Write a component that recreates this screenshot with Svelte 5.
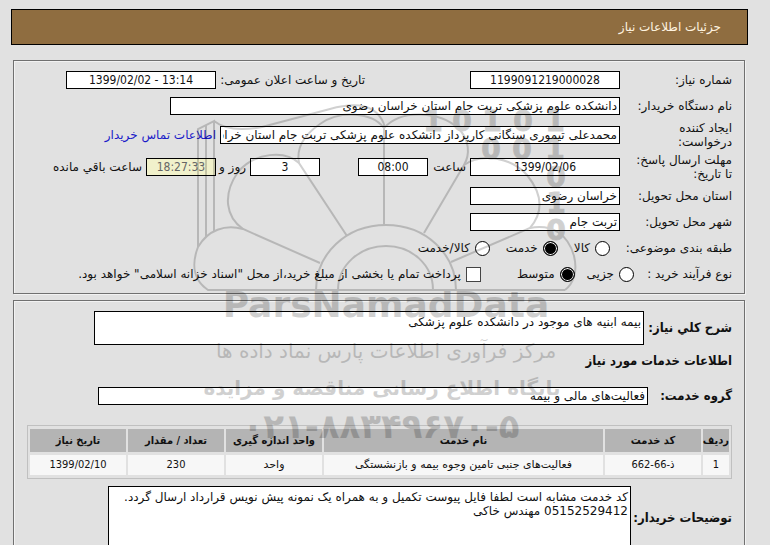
<script lang="ts">
  interface ServiceRow {
    index: string;
    code: string;
    name: string;
    unit: string;
    amount: string;
    date: string;
  }

  const rows: ServiceRow[] = [
    {
      index: "1",
      code: "ذ-66-662",
      name: "فعالیت‌های جنبی تامین وجوه بیمه و بازنشستگی",
      unit: "واحد",
      amount: "230",
      date: "1399/02/10",
    },
  ];

  const subjects = ["کالا", "خدمت", "کالا/خدمت"];
  const processes = ["جزیی", "متوسط"];

  const binaryDigits = [
    { x: 433, y: 131, digit: "1" },
    { x: 462, y: 131, digit: "0" },
    { x: 492, y: 131, digit: "1" },
    { x: 523, y: 131, digit: "0" },
    { x: 555, y: 131, digit: "1" },
    { x: 491, y: 159, digit: "0" },
    { x: 522, y: 159, digit: "0" },
    { x: 555, y: 159, digit: "1" },
    { x: 556, y: 187, digit: "0" },
    { x: 556, y: 213, digit: "1" },
    { x: 556, y: 240, digit: "0" },
  ];

  let subject = $state("خدمت");
  let process = $state("متوسط");
  let treasury = $state(false);
</script>

<div class="page" dir="rtl">
  <header class="title">جزئیات اطلاعات نیاز</header>

  <section class="panel">
    <div class="row">
      <label class="caption" for="need-no">شماره نیاز:</label>
      <input id="need-no" class="mid number" value="1199091219000028" readonly />
      <label class="announce" for="announce">تاریخ و ساعت اعلان عمومی:</label>
      <input id="announce" class="mid number" dir="ltr" value="1399/02/02 - 13:14" readonly />
    </div>
    <div class="row">
      <label class="caption" for="buyer">نام دستگاه خریدار:</label>
      <input id="buyer" class="wide" value="دانشکده علوم پزشکی تربت جام استان خراسان رضوی" readonly />
    </div>
    <div class="row tall">
      <label class="caption" for="creator">ایجاد کننده<br />درخواست:</label>
      <input id="creator" class="long" value="محمدعلی تیموری سنگانی کارپرداز دانشکده علوم پزشکی تربت جام استان خراسان رضوی" readonly />
      <a class="contact" href="#contact">اطلاعات تماس خریدار</a>
    </div>
    <div class="row tall">
      <label class="caption" for="deadline">مهلت ارسال پاسخ:<br />تا تاریخ:</label>
      <input id="deadline" class="mid number" value="1399/02/06" readonly />
      <label class="hour" for="hour">ساعت</label>
      <input id="hour" class="short number" value="08:00" readonly />
      <input id="days" class="short number days" value="3" readonly />
      <label class="and" for="days">روز و</label>
      <input id="remaining" class="short number remaining" value="18:27:33" readonly />
      <label class="left" for="remaining">ساعت باقي مانده</label>
    </div>
    <div class="row">
      <label class="caption" for="province">استان محل تحویل:</label>
      <input id="province" class="mid" value="خراسان رضوی" readonly />
    </div>
    <div class="row">
      <label class="caption" for="city">شهر محل تحویل:</label>
      <input id="city" class="mid" value="تربت جام" readonly />
    </div>
    <div class="row" role="radiogroup" aria-labelledby="subject-caption">
      <span class="caption subject" id="subject-caption">طبقه بندی موضوعی:</span>
      <div class="options">
        {#each subjects as item}
          <label class="option"><input type="radio" name="subject" value={item} bind:group={subject} />{item}</label>
        {/each}
      </div>
    </div>
    <div class="row" role="radiogroup" aria-labelledby="process-caption">
      <span class="caption process" id="process-caption">نوع فرآیند خرید :</span>
      <div class="options">
        {#each processes as item}
          <label class="option"><input type="radio" name="process" value={item} bind:group={process} />{item}</label>
        {/each}
      </div>
      <label class="option treasury">
        <input type="checkbox" bind:checked={treasury} />پرداخت تمام یا بخشی از مبلغ خرید،از محل "اسناد خزانه اسلامی" خواهد بود.
      </label>
    </div>
  </section>

  <section class="panel details">
    <div class="row">
      <label class="strong summary-label" for="summary">شرح کلي نیاز:</label>
      <textarea id="summary" class="summary" readonly>بیمه ابنیه های موجود در دانشکده علوم پزشکی</textarea>
    </div>
    <h2 class="strong">اطلاعات خدمات مورد نیاز</h2>
    <div class="row">
      <label class="strong group-label" for="group">گروه خدمت:</label>
      <input id="group" class="group" value="فعالیت‌های مالی و بیمه" readonly />
    </div>
    <table>
      <thead>
        <tr>
          <th class="c-index">ردیف</th>
          <th class="c-side">کد خدمت</th>
          <th>نام خدمت</th>
          <th class="c-side">واحد اندازه گیری</th>
          <th class="c-side">تعداد / مقدار</th>
          <th class="c-side">تاریخ نیاز</th>
        </tr>
      </thead>
      <tbody>
        {#each rows as row}
          <tr>
            <td class="number">{row.index}</td>
            <td class="number">{row.code}</td>
            <td>{row.name}</td>
            <td>{row.unit}</td>
            <td class="number">{row.amount}</td>
            <td class="number">{row.date}</td>
          </tr>
        {/each}
      </tbody>
    </table>
    <div class="row">
      <label class="strong notes-label" for="notes">توضیحات خریدار:</label>
      <textarea id="notes" class="notes" readonly>کد خدمت مشابه است لطفا فایل پیوست تکمیل و به همراه یک نمونه پیش نویس قرارداد ارسال گردد.
05152529412 مهندس خاکی</textarea>
    </div>
  </section>

  <svg class="watermark" viewBox="185 90 400 360" aria-hidden="true">
    <g class="lines">
      <path d="M198 247V129L214 121V231M206 237V125M214 121C224 129 240 131 262 127L330 109C355 102 376 104 384 124" />
      <path d="M384 124V225M384 128C372 112 340 110 320 124C304 135 296 148 299 163L347 236" />
      <path d="M299 163C285 150 255 152 238 172C222 195 226 217 243 229L320 263" />
      <path d="M243 229C225 224 208 230 198 247C190 268 196 282 208 290H565" />
      <path d="M384 128C402 108 440 112 458 128C470 140 470 155 464 165L424 233" />
      <path d="M464 165C482 152 512 158 527 175C544 196 542 214 530 228L451 262" />
      <path d="M530 228C552 224 568 234 574 256C578 272 573 284 565 290" />
      <path d="M316 290C316 254 346 225 386 225S456 254 456 290M338 290C338 265 360 246 386 246S433 265 433 290" />
    </g>
    {#each binaryDigits as { x, y, digit }}
      <text class="digit" {x} {y}>{digit}</text>
    {/each}
    <text class="brand" x="386" y="317">ParsNamadData</text>
    <text class="script" x="386" y="358">مرکز فرآوری اطلاعات پارس نماد داده ها</text>
    <text class="slogan" x="382" y="395">پایگاه اطلاع رسانی مناقصه و مزایده</text>
    <text class="phone" x="381" y="438">۰۲۱-۸۸۳۴۹۶۷۰-۵</text>
  </svg>
</div>

<style>
  :global(body) {
    margin: 0;
    background: #e1e1e1;
  }

  .page {
    position: relative;
    overflow: hidden;
    padding: 9px 22px 12px 11px;
    font-family: "DejaVu Sans", sans-serif;
    font-size: 12px;
    line-height: 14px;
    color: #111;
  }

  .title {
    padding: 10px 26px;
    border: 1px solid #000;
    background: #8f6d40;
    color: #fff4e0;
  }

  .panel {
    margin: 15px 3px 0 2px;
    padding: 6px 12px 6px 13px;
    border: 1px solid #707070;
    box-shadow: 1px 1px 0 #f2f2f2, inset 1px 1px 0 #f2f2f2;
  }

  .row {
    display: flex;
    align-items: center;
    min-height: 26px;
    white-space: nowrap;
  }

  .tall {
    min-height: 32px;
  }

  .caption {
    flex: none;
    width: 112px;
  }

  input,
  textarea {
    box-sizing: border-box;
    flex: none;
    margin: 0;
    padding: 0 2px;
    border: 1px solid #000;
    border-radius: 0;
    background: #fff;
    color: #111;
    font: inherit;
    outline: none;
  }

  input {
    height: 18px;
  }

  textarea {
    resize: none;
    overflow: hidden;
    line-height: 14px;
  }

  .mid {
    width: 150px;
  }

  .wide {
    width: 450px;
  }

  .long {
    width: 400px;
  }

  .short {
    width: 70px;
  }

  .number {
    font-family: "DejaVu Sans Condensed", "DejaVu Sans", sans-serif;
    text-align: center;
  }

  .announce {
    width: 149px;
    margin-right: 105px;
  }

  .contact {
    margin-right: 4px;
    color: #1a1ac8;
    text-decoration: none;
  }

  .hour {
    width: 38px;
    padding-right: 4px;
  }

  .days {
    margin-right: 38px;
  }

  .and {
    width: 30px;
    padding-right: 4px;
  }

  .remaining {
    background: #f1f1cb;
    color: #666;
  }

  .left {
    margin-right: 4px;
  }

  .options {
    display: flex;
    gap: 16px;
  }

  .caption.subject {
    width: 122px;
  }

  .caption.process {
    width: 98px;
  }

  .process + .options {
    gap: 12px;
  }

  .option {
    display: flex;
    align-items: center;
    gap: 5px;
  }

  .treasury {
    margin-right: 36px;
  }

  input[type="radio"],
  input[type="checkbox"] {
    appearance: none;
    width: 15px;
    height: 15px;
    padding: 0;
  }

  input[type="radio"] {
    border-radius: 50%;
  }

  input[type="radio"]:checked {
    background: #000;
    box-shadow: inset 0 0 0 1px #fff;
  }

  input[type="checkbox"] {
    border-color: #444;
  }

  input[type="checkbox"]:checked {
    background: #000;
    box-shadow: inset 0 0 0 2px #fff;
  }

  .details {
    margin-top: 6px;
    padding-top: 10px;
  }

  .strong {
    flex: none;
    font-family: "DejaVu Sans Condensed", "DejaVu Sans", sans-serif;
    font-size: 13px;
    font-weight: bold;
    line-height: 14px;
  }

  .summary-label {
    width: 88px;
  }

  .summary {
    width: 550px;
    height: 34px;
    padding-top: 3px;
  }

  h2 {
    margin: 9px 0 15px;
  }

  .group-label {
    width: 84px;
  }

  .group {
    width: 550px;
  }

  table {
    width: 100%;
    margin: 16px 0 7px;
    border: 1px solid #c0c0c0;
    border-collapse: separate;
    border-spacing: 2px 3px;
    table-layout: fixed;
    font-size: 11px;
    text-align: center;
  }

  th,
  td {
    padding: 0;
    height: 20px;
    background: #f7f7f7;
    white-space: nowrap;
  }

  th {
    height: 23px;
    background: #b4b4b4;
    font-family: "DejaVu Sans Condensed", "DejaVu Sans", sans-serif;
  }

  .c-index {
    width: 26px;
  }

  .c-side {
    width: 96px;
  }

  .notes-label {
    width: 101px;
  }

  .notes {
    width: 523px;
    height: 64px;
    padding-top: 3px;
    white-space: pre-wrap;
  }

  .watermark {
    position: absolute;
    top: 90px;
    left: 185px;
    width: 400px;
    height: 360px;
    opacity: 0.18;
    pointer-events: none;
    direction: ltr;
  }

  .lines {
    fill: none;
    stroke: #000;
    stroke-width: 2;
  }

  .watermark text {
    text-anchor: middle;
    font-family: "DejaVu Sans", sans-serif;
    font-weight: bold;
  }

  .watermark .digit {
    font-size: 28px;
    stroke: #000;
    stroke-width: 1;
  }

  .watermark .brand {
    font-size: 36px;
  }

  .watermark .script {
    font-size: 20px;
    font-weight: normal;
  }

  .watermark .slogan {
    font-size: 20px;
  }

  .watermark .phone {
    font-size: 34px;
  }
</style>
